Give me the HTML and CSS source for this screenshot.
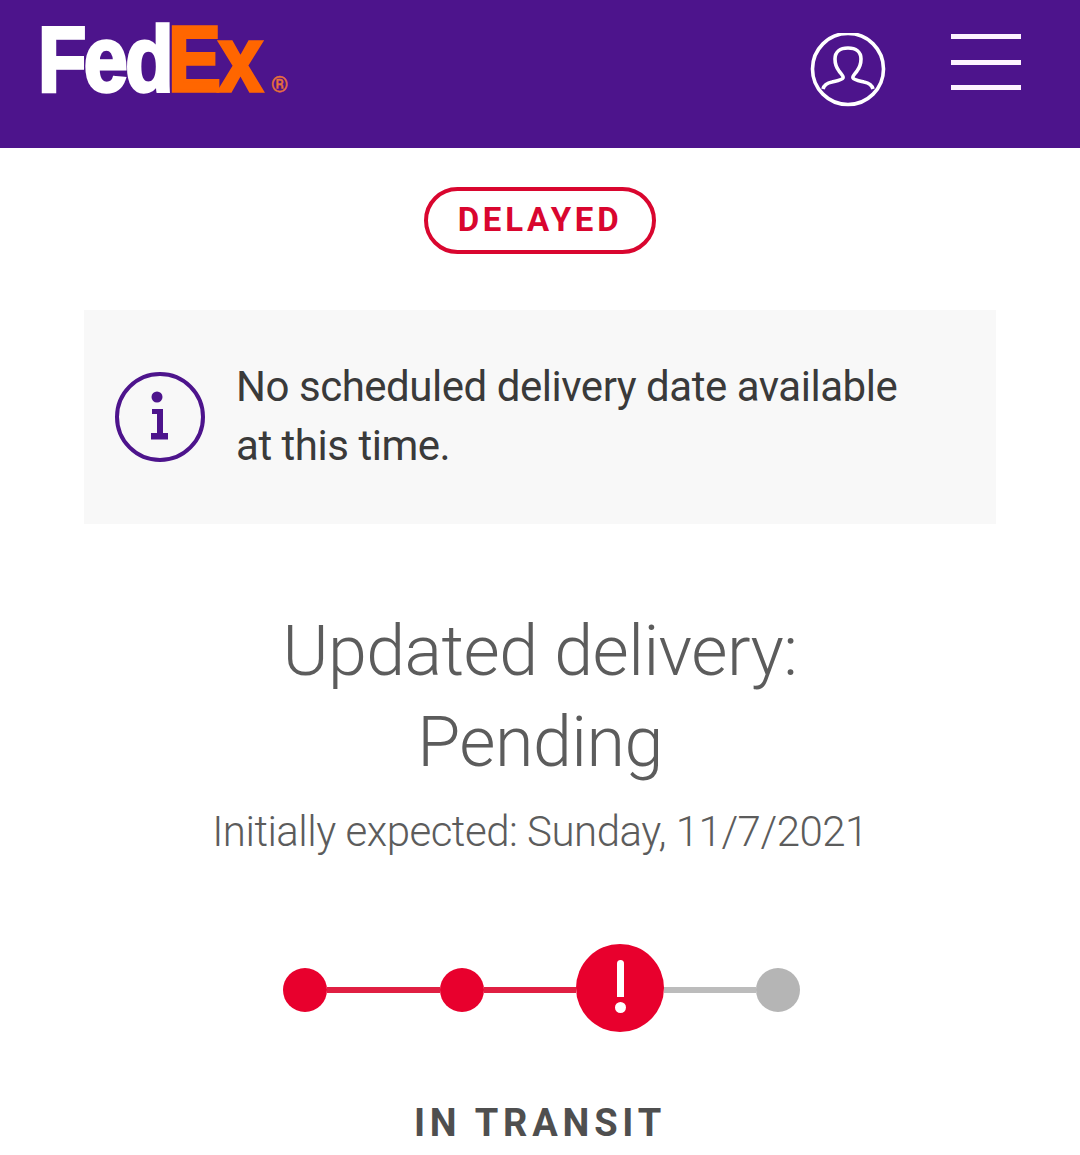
FILE: index.html
```html
<!DOCTYPE html>
<html lang="en">
<head>
<meta charset="utf-8">
<title>FedEx Tracking</title>
<link rel="stylesheet" href="styles.css">
</head>
<body>
<header class="topbar">
  <svg class="logo" viewBox="0 0 260 110" width="260" height="110">
    <text class="logo-fed" x="-3" y="91" textLength="133" lengthAdjust="spacingAndGlyphs">Fed</text>
    <text class="logo-ex" x="127" y="91" textLength="92" lengthAdjust="spacingAndGlyphs">Ex</text>
    <text class="logo-reg" x="230" y="92">®</text>
  </svg>
  <div class="top-actions">
    <svg class="user-icon" viewBox="0 0 76 76" width="76" height="76" fill="none" stroke="#fff" stroke-width="3.600">
      <circle cx="38" cy="36" r="35.500"/>
      <path d="M13 56C14 52 17 50 22 49C26 48 32 47 33 45C34 43 31 41 29 38C26 34 25 30 25 26C25 19 30 15 38 15C46 15 51 19 51 26C51 30 50 34 47 38C45 41 42 43 43 45C44 47 50 48 54 49C59 50 62 52 63 56"/>
    </svg>
    <div class="menu-icon"><span></span><span></span><span></span></div>
  </div>
</header>
<main class="content">
  <div class="pill">DELAYED</div>
  <section class="notice">
    <svg class="info-icon" viewBox="0 0 90 90" width="90" height="90">
      <circle cx="45" cy="45" r="43" fill="none" stroke="#4d148c" stroke-width="4"/>
      <circle cx="42" cy="25" r="5.500" fill="#4d148c"/>
      <path d="M37 37h11v24h5v6.500H36V61h6V42h-5z" fill="#4d148c"/>
    </svg>
    <p class="notice-text">No scheduled delivery date available at this time.</p>
  </section>
  <h1 class="headline">Updated delivery:<br>Pending</h1>
  <p class="expected">Initially expected: Sunday, 11/7/2021</p>
  <div class="progress">
    <span class="dot"></span>
    <span class="line"></span>
    <span class="dot"></span>
    <span class="line line-short"></span>
    <span class="alert"><span class="alert-bar"></span><span class="alert-dot"></span></span>
    <span class="line line-grey"></span>
    <span class="dot dot-grey"></span>
  </div>
  <p class="status">IN TRANSIT</p>
</main>
</body>
</html>
```
FILE: styles.css
```css
* { box-sizing: border-box; }
html, body { margin: 0; padding: 0; }
body {
  width: 1080px;
  height: 1155px;
  overflow: hidden;
  background: #fff;
  font-family: Roboto, "Liberation Sans", sans-serif;
}
.topbar {
  height: 148px;
  background: #4d148c;
  display: flex;
  justify-content: space-between;
  padding: 0 59px 0 41px;
}
.logo { display: block; flex: none; overflow: visible; }
.logo-fed, .logo-ex {
  font-family: "Liberation Sans", Arial, sans-serif;
  font-weight: 700;
  font-size: 93px;
  letter-spacing: -3px;
  stroke-width: 3.500px;
}
.logo-fed { fill: #fff; stroke: #fff; }
.logo-ex { fill: #ff6600; stroke: #ff6600; }
.logo-reg {
  fill: #e8703a;
  font-family: Roboto, sans-serif;
  font-size: 22px;
  stroke: #e8703a;
  stroke-width: 0.400px;
}
.top-actions {
  display: flex;
  align-items: flex-start;
  gap: 65px;
  padding-top: 33px;
}
.user-icon { display: block; }
.menu-icon {
  width: 70px;
  height: 56px;
  margin-top: 1px;
  display: flex;
  flex-direction: column;
  justify-content: space-between;
}
.menu-icon span {
  display: block;
  height: 5px;
  background: #fdf3ff;
}
.content {
  display: flex;
  flex-direction: column;
  align-items: center;
}
.pill {
  width: 232px;
  height: 67px;
  margin-top: 39px;
  border: 4.500px solid #d9062f;
  border-radius: 34px;
  color: #d9062f;
  font-weight: 700;
  font-size: 33px;
  letter-spacing: 3.700px;
  line-height: 58px;
  text-align: center;
}
.notice {
  width: 912px;
  height: 214px;
  margin-top: 56px;
  background: #f8f8f8;
  display: flex;
  align-items: center;
  gap: 31px;
  padding: 0 60px 2px 31px;
}
.info-icon { flex: none; margin-bottom: -2px; }
.notice-text {
  margin: 0;
  font-size: 42px;
  line-height: 59px;
  letter-spacing: -0.470px;
  color: #3a3a3a;
}
.headline {
  margin: 82px 0 0;
  font-size: 70px;
  line-height: 91px;
  font-weight: 300;
  letter-spacing: -0.530px;
  color: #5c5c5c;
  text-align: center;
}
.expected {
  margin: 14px 0 0;
  font-size: 42px;
  line-height: 59px;
  font-weight: 300;
  letter-spacing: -0.490px;
  color: #5c5c5c;
}
.progress {
  display: flex;
  align-items: center;
  margin: 85px 0 0 3px;
  height: 88px;
}
.dot {
  width: 44px;
  height: 44px;
  border-radius: 50%;
  background: #e8002d;
  flex: none;
}
.dot-grey { background: #b5b5b5; }
.line {
  width: 113px;
  height: 6px;
  background: #e01f42;
  flex: none;
}
.line-short { width: 92px; }
.line-grey { width: 92px; background: #bcbcbc; }
.alert {
  width: 88px;
  height: 88px;
  margin-top: -4px;
  border-radius: 50%;
  background: #e8002d;
  flex: none;
  display: flex;
  flex-direction: column;
  align-items: center;
  padding-top: 16px;
}
.alert-bar {
  width: 7px;
  height: 37px;
  background: #fff;
  border-radius: 4px 4px 0 0;
}
.alert-dot {
  width: 11px;
  height: 11px;
  margin-top: 5px;
  background: #fff;
  border-radius: 50%;
}
.status {
  margin: 65px 0 0;
  font-size: 38px;
  line-height: 48px;
  font-weight: 700;
  letter-spacing: 4.800px;
  color: #4f4f4f;
}
```
